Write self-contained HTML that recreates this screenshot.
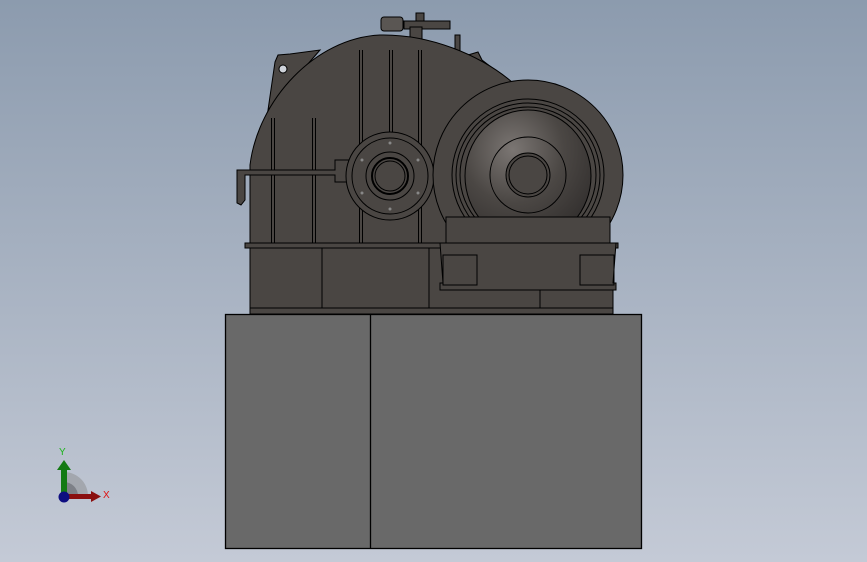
<!DOCTYPE html>
<html><head><style>
html,body{margin:0;padding:0}
body{width:867px;height:562px;overflow:hidden;background:linear-gradient(#8c9bae,#c4cad6);}
svg{display:block}
</style></head><body>
<svg width="867" height="562" viewBox="0 0 867 562" xmlns="http://www.w3.org/2000/svg">
<defs>
<radialGradient id="dome" cx="0.38" cy="0.3" r="0.8">
<stop offset="0" stop-color="#7b7673"/><stop offset="0.5" stop-color="#4b4744"/><stop offset="1" stop-color="#2f2c2b"/>
</radialGradient>
</defs>
<g stroke="#000" stroke-width="1" fill="#4a4643">
<!-- top fittings -->
<rect x="381" y="17" width="22" height="14" rx="3" fill="#5a5653"/>
<rect x="404" y="21" width="46" height="8" fill="#4a4643"/>
<rect x="416" y="13" width="8" height="8"/>
<rect x="410" y="27" width="12" height="14"/>
<rect x="455" y="35" width="5" height="16"/>
<!-- housing ear -->
<path d="M275 62 L278 55 L290 54 L320 50 L268 110 Z"/>
<circle cx="283" cy="69" r="4" fill="#cfd3da"/>
<path d="M468 55 L478 52 L482 60 L508 80 L470 70Z"/>
<!-- main housing dome -->
<path d="M250 245 L250 165 C258 100 315 38 380 35 C430 34 480 55 512 82 L512 245 Z"/>
<!-- ribs -->
<path d="M361 50 L361 243 M391 50 L391 132 M420 50 L420 243 M273 118 L273 243 M314 118 L314 243" fill="none" stroke-width="4"/>
<path d="M361 50 L361 243 M391 50 L391 132 M420 50 L420 243 M273 118 L273 243 M314 118 L314 243" fill="none" stroke="#4a4643" stroke-width="2"/>
<!-- left flange -->
<path d="M237 170 L335 170 L335 160 L350 160 L350 182 L335 182 L335 175 L245 175 L245 200 L241 205 L237 203 Z"/>
<!-- bearing -->
<circle cx="390" cy="176" r="44"/>
<circle cx="390" cy="176" r="38"/>
<circle cx="390" cy="176" r="24"/>
<circle cx="390" cy="176" r="18" stroke-width="2"/>
<circle cx="390" cy="176" r="15"/>
<g fill="#888" stroke="none"><circle cx="390" cy="143" r="1.5"/><circle cx="390" cy="209" r="1.5"/><circle cx="362" cy="160" r="1.5"/><circle cx="418" cy="160" r="1.5"/><circle cx="362" cy="193" r="1.5"/><circle cx="418" cy="193" r="1.5"/></g>
<!-- lower base -->
<rect x="250" y="248" width="363" height="60"/>
<rect x="250" y="308" width="363" height="6"/>
<rect x="245" y="243" width="373" height="5"/>
<path d="M322 248 L322 308 M429 248 L429 308 M540 248 L540 308" fill="none"/>
<!-- motor -->
<circle cx="528" cy="175" r="95"/>
<circle cx="528" cy="175" r="76"/>
<circle cx="528" cy="175" r="72"/>
<circle cx="528" cy="175" r="68"/>
<ellipse cx="528" cy="176" rx="63" ry="66" fill="url(#dome)"/>
<circle cx="528" cy="175" r="38" fill="none"/>
<circle cx="528" cy="175" r="22" fill="#4a4643"/>
<circle cx="528" cy="175" r="19" fill="none"/>
<!-- motor foot -->
<rect x="446" y="217" width="164" height="26"/>
<path d="M440 243 L616 243 L613 283 L616 283 L616 290 L440 290 L440 283 L443 283 Z"/>
<rect x="443" y="255" width="34" height="30" fill="none"/>
<rect x="580" y="255" width="34" height="30" fill="none"/>
</g>
<!-- pedestal -->
<rect x="225.5" y="314.5" width="416" height="234" fill="#696969" stroke="#000" stroke-width="1.3"/>
<line x1="370.5" y1="315" x2="370.5" y2="548" stroke="#000" stroke-width="1.3"/>
<!-- triad -->
<path d="M64 496 L64 472 A24 24 0 0 1 88 496 Z" fill="#a3a7ae"/>
<path d="M64 496 L64 482 A14 14 0 0 1 78 496 Z" fill="#7d8087"/>
<rect x="61" y="468" width="6" height="26" fill="#137a13"/>
<polygon points="57,470 64,460 71,470" fill="#137a13"/>
<rect x="66" y="494" width="26" height="5" fill="#8a0f0f"/>
<polygon points="91,491 101,496.5 91,502" fill="#8a0f0f"/>
<circle cx="64" cy="497" r="5.5" fill="#0d0d80"/>
<text x="59" y="455" font-family="Liberation Sans,sans-serif" font-size="10" fill="#1db31d">Y</text>
<text x="103" y="498" font-family="Liberation Sans,sans-serif" font-size="10" fill="#e01010">X</text>
</svg>
</body></html>
